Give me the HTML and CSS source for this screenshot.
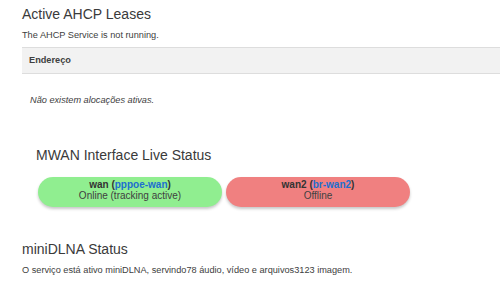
FILE: index.html
```html
<!DOCTYPE html>
<html lang="pt">
<head>
<meta charset="UTF-8">
<title>Status</title>
<link rel="stylesheet" href="styles.css">
</head>
<body>

<!-- AHCP -->
<section class="section">
  <h2>Active AHCP Leases</h2>
  <p class="note">The AHCP Service is not running.</p>
  <div class="table">
    <div class="th">Endereço</div>
  </div>
  <p class="empty">Não existem alocações ativas.</p>
</section>

<!-- MWAN -->
<section class="section mwan">
  <h2>MWAN Interface Live Status</h2>
  <div class="pills">
    <div class="pill online">
      <strong>wan (<span class="dev">pppoe-wan</span>)</strong><br>Online (tracking active)
    </div>
    <div class="pill offline">
      <strong>wan2 (<span class="dev">br-wan2</span>)</strong><br>Offline
    </div>
  </div>
</section>

<!-- miniDLNA -->
<section class="section dlna">
  <h2>miniDLNA Status</h2>
  <p class="note">O serviço está ativo miniDLNA, servindo78 áudio, vídeo e arquivos3123 imagem.</p>
</section>

</body>
</html>
```

FILE: styles.css
```css
:root{
  --text  : #404040;
  --head  : #3a3a3a;
  --line  : #dddddd;
  --th-bg : #f2f2f2;
  --link  : #1c6fcf;
}
*{box-sizing:border-box;}
html,body{margin:0;background:#fff;}
body{
  padding:6px 0 0 22px;
  font-family:"Liberation Sans",Arial,sans-serif;color:var(--text);
}

h2{margin:0;font-size:14px;line-height:16px;font-weight:400;color:var(--head);}
.note{margin:8px 0 0;font-size:9.2px;line-height:11px;}

.table{margin-top:6px;border-top:1px solid var(--line);border-bottom:1px solid var(--line);background:var(--th-bg);}
.th{padding:7px 7px;font-size:9.2px;line-height:11px;font-weight:700;}
.empty{margin:21px 0 0;padding-left:8px;font-size:9.2px;line-height:11px;font-style:italic;}

.mwan{margin-top:41px;padding-left:14px;}
.pills{display:flex;gap:4px;margin-top:14px;padding-left:2px;}
.pill{
  width:184px;height:30px;padding:2px 0 6px;border-radius:15px;
  font-size:10px;line-height:11px;text-align:center;color:var(--text);
  box-shadow:0 2px 3px rgba(0,0,0,.22);
}
.pill strong{color:#333;}
.pill .dev{color:var(--link);}
.online{background:#90ee90;}
.offline{background:#f08080;}

.dlna{margin-top:34px;}
.dlna .note{margin-top:8px;}
```
